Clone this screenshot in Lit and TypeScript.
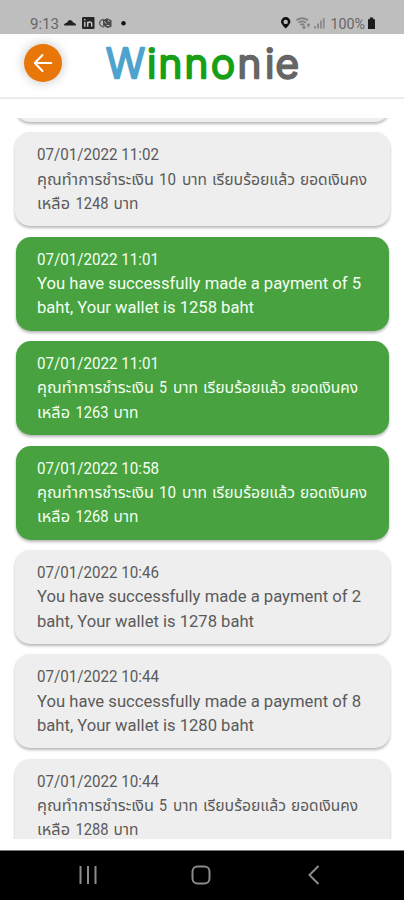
import { LitElement, html, svg, css } from "lit";
import { customElement, property } from "lit/decorators.js";
import { classMap } from "lit/directives/class-map.js";
import { styleMap } from "lit/directives/style-map.js";

/** A run of text with its start and length inside the line. */
interface Run {
  text: string;
  x: number;
  width: number;
}

interface Line {
  width: number;
  runs: Run[];
}

interface Notice {
  unread: boolean;
  lines: Line[];
}

const line = (...runs: Run[]): Line => {
  const last = runs[runs.length - 1];
  return { width: last.x + last.width, runs };
};

const stamp = (time: string): Line => line({ text: `07/01/2022 ${time}`, x: 0, width: 122 });

const en = (time: string, amount: string, left: string, unread = false): Notice => ({
  unread,
  lines: [
    stamp(time),
    line({ text: `You have successfully made a payment of ${amount}`, x: 0, width: 324 }),
    line({ text: `baht, Your wallet is ${left} baht`, x: 0, width: 217 }),
  ],
});

const th = (time: string, amount: string, left: string, unread = false): Notice => {
  const d = amount.length > 1 ? 9 : 0;
  return {
    unread,
    lines: [
      stamp(time),
      line(
        { text: "คุณทำการชำระเงิน", x: 0, width: 117 },
        { text: amount, x: 122, width: d + 8 },
        { text: "บาท", x: 136 + d, width: 25 },
        { text: "เรียบร้อยแล้ว", x: 166 + d, width: 83 },
        { text: "ยอดเงินคง", x: 254 + d, width: 67 }
      ),
      line(
        { text: "เหลือ", x: 0, width: 33 },
        { text: left, x: 38.5, width: 33 },
        { text: "บาท", x: 76.5, width: 25 }
      ),
    ],
  };
};

const NOTICES: Notice[] = [
  th("11:02", "10", "1248"),
  en("11:01", "5", "1258", true),
  th("11:01", "5", "1263", true),
  th("10:58", "10", "1268", true),
  en("10:46", "2", "1278"),
  en("10:44", "8", "1280"),
  th("10:44", "5", "1288"),
];

@customElement("status-bar")
class StatusBar extends LitElement {
  static styles = css`
    :host { display: block; height: 34px; background: #bebebe; }
    svg { display: block; }
    text { font: 14.5px Roboto, "Noto Sans", sans-serif; fill: #666; }
  `;
  render() {
    return html`<svg width="404" height="34" viewBox="0 0 404 34">
      <text x="30" y="28.5" textLength="29" lengthAdjust="spacingAndGlyphs">9:13</text>
      <path d="M64 25.500q0-2.300 3-2.700 1-3.200 3.800-2.600 1.800.3 2.200 2.200 3 .6 3 3.100z" fill="#202020" />
      <rect x="82" y="17" width="12.500" height="12" rx="1" fill="#252525" />
      <path d="M84.800 21.800v5M84.800 19v1.200M87.700 21.800v5M87.700 24q0-2 2-2t2 2v2.800" fill="none" stroke="#c8c8c8" stroke-width="1.400" />
      <path d="M104 19.500q-4 .2-4.500 3.500.5 3.500 4.500 4" fill="none" stroke="#666" stroke-width="1.500" />
      <path d="M103 20l4-1.800 4.500 2v6.500l-4 1.300-4.500-2.500z" fill="#484848" />
      <path d="M104 21.500l2.500 2M108 20l1.500 2M106.500 25.500h3" stroke="#bbb" stroke-width="1" />
      <circle cx="123.500" cy="23.200" r="2.200" fill="#111" />
      <path fill-rule="evenodd" d="M285.700 28.500q-4.700-4.500-4.700-6.800a4.700 4.700 0 0 1 9.400 0q0 2.300-4.700 6.800zM285.700 19.700a2.200 2.200 0 1 0 0 4.400 2.200 2.200 0 0 0 0-4.400z" fill="#111" />
      <path d="M296.500 20.300q5.700-4.200 11.500 0M298.500 22.700q3.800-2.700 7.500 0M300.500 25q2-1.500 3.500 0" fill="none" stroke="#828282" stroke-width="1.900" />
      <path d="M304 25v3.500M302.300 26.800l1.700 1.700 1.700-1.700M308.500 27.500v-3.500M307 25.500l1.500-1.700 1.500 1.700" fill="none" stroke="#7c7c7c" stroke-width="1.100" />
      <path d="M314 28.500v-2.500h2v2.500zM317 28.500v-5h2v5zM320 28.500v-8h1.800v8zM322.800 28.500v-10.500h1.800v10.500z" fill="#8b8b8b" />
      <text x="330.500" y="28.500" textLength="34.500" lengthAdjust="spacingAndGlyphs">100%</text>
      <path d="M368 19.200h1.800v-1.700h3.400v1.700h1.800v9.800h-7z" fill="#1c1c1c" />
    </svg>`;
  }
}

@customElement("app-header")
class AppHeader extends LitElement {
  static styles = css`
    :host {
      display: flex; align-items: flex-start; box-sizing: border-box;
      height: 65px; background: #fff; border-bottom: 2px solid #ebebeb;
      padding: 10px 0 0 24px;
    }
    .back {
      display: grid; place-items: center; width: 38px; height: 38px; padding: 0;
      border: 0; border-radius: 50%; background: #e87608;
      box-shadow: 0 0 10px 2px #0000002b;
    }
    .logo { margin: -8px 0 0 40px; overflow: visible; }
    .logo text {
      font: 300 40.5px Inter, "Noto Sans", sans-serif;
      stroke-width: 2.500; stroke-linejoin: round;
    }
    .blue { fill: #4da3cd; stroke: #4da3cd; }
    .green { fill: #17a017; stroke: #17a017; }
    .grey { fill: #666; stroke: #666; }
  `;
  render() {
    return html`
      <button class="back" aria-label="Back">
        <svg width="22" height="22" viewBox="0 0 22 22" fill="none" stroke="#fff" stroke-width="2" stroke-linecap="round" stroke-linejoin="round">
          <path d="M19.300 11H3M10.500 3 2.800 11l7.700 8" />
        </svg>
      </button>
      <svg class="logo" width="204" height="60" viewBox="0 0 204 60">
        <text class="blue" x="4" y="41.500" textLength="39" lengthAdjust="spacingAndGlyphs">W</text>
        <text class="green" y="41.500" x="45 56.500 82.500 109">inno</text>
        <text class="grey" y="41.500" x="135.500 163 173.500">nie</text>
      </svg>`;
  }
}

@customElement("notice-card")
class NoticeCard extends LitElement {
  @property({ attribute: false }) notice!: Notice;

  static styles = css`
    :host { display: block; }
    .card {
      box-sizing: border-box; height: 94px; margin: 0 14px 0 15px; padding: 10px 0 0 22px;
      border-radius: 15px; background: #eee; color: #5a5a5a;
      box-shadow: 0 2px 3px #00000048;
    }
    .unread { margin: 0 15px 0 16px; padding-left: 21px; background: #48a23f; color: #f4fff2; }
    .line { display: block; height: 24.300px; overflow: visible; }
    text { font: 16px Roboto, "Noto Sans Thai", "Noto Sans", sans-serif; fill: currentColor; }
  `;
  render() {
    return html`<div class=${classMap({ card: true, unread: this.notice.unread })}>
      ${this.notice.lines.map(
        (l) => html`<svg class="line" style=${styleMap({ width: `${l.width}px` })}>
          ${l.runs.map(
            (r) => svg`<text x=${r.x} y="18" textLength=${r.width} lengthAdjust="spacingAndGlyphs">${r.text}</text>`
          )}
        </svg>`
      )}
    </div>`;
  }
}

@customElement("app-root")
class AppRoot extends LitElement {
  static styles = css`
    :host { display: flex; flex-direction: column; width: 404px; height: 900px; background: #fff; overflow: hidden; }
    .list {
      display: flex; flex-direction: column; gap: 10.400px;
      height: 721px; margin-top: 19px; overflow: hidden;
    }
    .previous {
      flex: none; height: 94px; margin: -90px 14px 0 15px; border-radius: 15px;
      background: #eee; box-shadow: 0 2px 3px #00000048;
    }
    notice-card { flex: none; }
    .nav {
      box-sizing: border-box; height: 50px; margin-top: auto; background: #000; border-top: 1px solid #777;
    }
    .nav svg { display: block; }
  `;
  render() {
    return html`
      <status-bar></status-bar>
      <app-header></app-header>
      <main class="list">
        <div class="previous"></div>
        ${NOTICES.map((n) => html`<notice-card .notice=${n}></notice-card>`)}
      </main>
      <nav class="nav">
        <svg width="404" height="49" viewBox="0 0 404 49" fill="none" stroke="#8c8c8c" stroke-width="2">
          <path d="M80.500 15v18M88 15v18M95.500 15v18" />
          <rect x="192.500" y="15.500" width="17" height="17" rx="5" />
          <path d="M318.500 15l-9 9 9 9" />
        </svg>
      </nav>`;
  }
}
